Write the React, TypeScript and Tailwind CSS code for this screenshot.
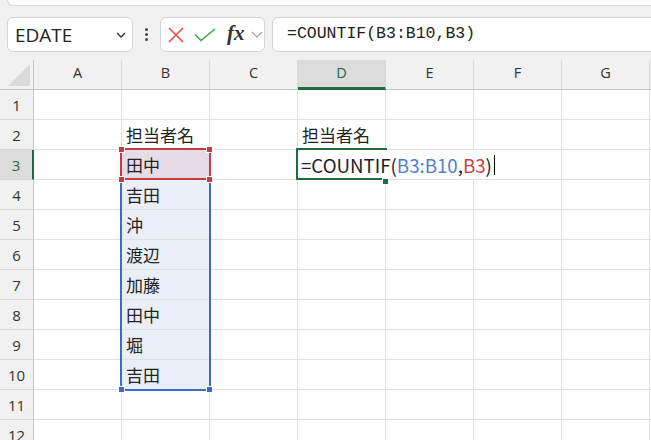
import React from 'react';

const COLS = ['A', 'B', 'C', 'D', 'E', 'F', 'G'];
const ROWS = [1, 2, 3, 4, 5, 6, 7, 8, 9, 10, 11, 12];

// 担当者名 list in column B
const NAMES: Record<number, string> = {
  2: '担当者名',
  3: '田中',
  4: '吉田',
  5: '沖',
  6: '渡辺',
  7: '加藤',
  8: '田中',
  9: '堀',
  10: '吉田',
};

const cellFont = { fontFamily: '"Noto Sans CJK JP", "Noto Sans", sans-serif' };

const FormulaBar = () => (
  <div className="h-[60px] bg-[#f1f1f1]">
    <div className="ml-[7px] h-[6px] bg-white border-b border-l border-[#d8d8d8] rounded-bl-[8px]" />
    <div className="flex items-center mt-[11px] h-[35px]">
      {/* name box */}
      <div className="ml-[7px] w-[126px] h-[35px] shrink-0 bg-white border border-[#d5d5d5] rounded-[6px] flex items-center justify-between pl-[7px] pr-[5px]">
        <span className="text-[19px] text-[#222] font-['Open_Sans',sans-serif] leading-none mt-[2px]">EDATE</span>
        <svg width="10" height="6" viewBox="0 0 10 6" className="mr-[1px]">
          <path d="M1 1 L5 5 L9 1" fill="none" stroke="#333" strokeWidth="1.3" />
        </svg>
      </div>
      {/* dots */}
      <div className="w-[27px] shrink-0 flex flex-col items-center gap-[2px]">
        <span className="w-[3px] h-[3px] rounded-full bg-[#444]" />
        <span className="w-[3px] h-[3px] rounded-full bg-[#444]" />
        <span className="w-[3px] h-[3px] rounded-full bg-[#444]" />
      </div>
      {/* cancel / enter / fx */}
      <div className="w-[105px] h-[35px] shrink-0 bg-white border border-[#d5d5d5] rounded-[6px] flex items-center pl-[7px]">
        <svg width="16" height="16" viewBox="0 0 16 16">
          <path d="M1 1 L15 15 M15 1 L1 15" stroke="#ee4b4b" strokeWidth="1.6" />
        </svg>
        <svg width="22" height="14" viewBox="0 0 22 14" className="ml-[10px]">
          <path d="M1 6.5 L7 12.5 L21 1" fill="none" stroke="#3fa24f" strokeWidth="1.6" />
        </svg>
        <span className="ml-[11px] text-[21px] italic font-bold text-[#333] leading-none font-['Liberation_Serif',serif] -mt-[3px]">fx</span>
        <svg width="12" height="7" viewBox="0 0 12 7" className="ml-[6px]">
          <path d="M1 1 L6 6 L11 1" fill="none" stroke="#a0a0a0" strokeWidth="1.2" />
        </svg>
      </div>
      {/* formula */}
      <div className="ml-[7px] w-[420px] h-[35px] shrink-0 bg-white border border-[#d5d5d5] rounded-l-[6px] flex items-center pl-[14px]">
        <span className="text-[16.5px] text-[#222] font-['Liberation_Mono',monospace] leading-none">=COUNTIF(B3:B10,B3)</span>
      </div>
    </div>
  </div>
);

const ColumnHeaders = () => (
  <div className="flex h-[30px] text-[14.5px] font-['Open_Sans',sans-serif]">
    <div className="w-[34px] shrink-0 bg-[#f1f1f1] border-r border-b border-[#c6c6c6] flex items-end justify-end pr-[3px] pb-[3px]">
      <svg width="22" height="22" viewBox="0 0 22 22">
        <path d="M22 0 L22 22 L0 22 Z" fill="#dadada" />
      </svg>
    </div>
    {COLS.map((c) => (
      <div
        key={c}
        className={
          c === 'D'
            ? 'w-[88px] shrink-0 bg-[#dcdcdc] border-r border-[#d6d6d6] border-b-[3px] border-b-[#1e6b41] flex items-center justify-center text-[#1e6b41] pb-[2px]'
            : 'w-[88px] shrink-0 bg-[#f1f1f1] border-r border-[#d9d9d9] border-b border-b-[#c6c6c6] flex items-center justify-center text-[#333] pb-[3px]'
        }
      >
        {c}
      </div>
    ))}
    <div className="flex-1 bg-[#f1f1f1] border-b border-[#c6c6c6]" />
  </div>
);

const Row = ({ r }: { r: number }) => (
  <div className="flex h-[30px]">
    <div
      className={
        r === 3
          ? 'w-[34px] shrink-0 bg-[#dcdcdc] border-r-2 border-r-[#1e6b41] border-b border-b-[#d6d6d6] flex items-center justify-center text-[#1e6b41] text-[15px] font-["Open_Sans",sans-serif] pt-[2px]'
          : 'w-[34px] shrink-0 bg-[#f1f1f1] border-r border-r-[#c6c6c6] border-b border-b-[#d6d6d6] flex items-center justify-center text-[#333] text-[15px] font-["Open_Sans",sans-serif] pt-[2px]'
      }
    >
      {r}
    </div>
    {COLS.map((c) => {
      let cls = 'w-[88px] shrink-0 border-r border-b border-[#e1e1e1] relative';
      if (c === 'B' && r === 3) cls += ' bg-[#e7dce5]';
      else if (c === 'B' && r >= 4 && r <= 10) cls += ' bg-[#e9eef7]';
      if (r === 3 && (c === 'D' || c === 'E')) cls += ' border-r-white';
      return (
        <div key={c} className={cls} style={cellFont}>
          {c === 'B' && NAMES[r] && (
            <span className="absolute left-[4px] top-0 leading-[30px] text-[17px] text-[#222] whitespace-nowrap">
              {NAMES[r]}
            </span>
          )}
          {c === 'D' && r === 2 && (
            <span className="absolute left-[4px] top-0 leading-[30px] text-[17px] text-[#222] whitespace-nowrap">担当者名</span>
          )}
          {c === 'D' && r === 3 && (
            <span className="absolute left-[3px] top-0 h-[30px] leading-[30px] text-[18.7px] text-[#222] whitespace-nowrap z-10 flex items-center">
              =COUNTIF(<span className="text-[#4d7ed4]">B3:B10</span>,<span className="text-[#cc4047]">B3</span>)
              <span className="ml-[2px] w-[1px] h-[20px] bg-black" />
            </span>
          )}
        </div>
      );
    })}
    <div className="flex-1 border-b border-[#e1e1e1]" />
  </div>
);

export default function App() {
  return (
    <div className="w-[651px] h-[440px] overflow-hidden bg-white select-none">
      <FormulaBar />
      <div className="relative">
        <ColumnHeaders />
        {ROWS.map((r) => (
          <Row key={r} r={r} />
        ))}

        {/* B3:B10 reference range */}
        <div className="absolute left-[120px] top-[88px] w-[91px] h-[243px] border-2 border-[#3c6dc5]" />
        {/* B3 reference */}
        <div className="absolute left-[120px] top-[88px] w-[91px] h-[32px] border-2 border-[#c43b40]" />
        <div className="absolute left-[118px] top-[86px] w-[7px] h-[7px] bg-[#c43b40] border border-white" />
        <div className="absolute left-[206px] top-[86px] w-[7px] h-[7px] bg-[#c43b40] border border-white" />
        <div className="absolute left-[118px] top-[116px] w-[7px] h-[7px] bg-[#c43b40] border border-white" />
        <div className="absolute left-[206px] top-[116px] w-[7px] h-[7px] bg-[#c43b40] border border-white" />
        <div className="absolute left-[118px] top-[326px] w-[7px] h-[7px] bg-[#3c6dc5] border border-white" />
        <div className="absolute left-[206px] top-[326px] w-[7px] h-[7px] bg-[#3c6dc5] border border-white" />

        {/* active cell D3 */}
        <div className="absolute left-[296px] top-[88px] w-[91px] h-[2px] bg-[#1e6b41] z-20" />
        <div className="absolute left-[296px] top-[88px] w-[2px] h-[32px] bg-[#1e6b41] z-20" />
        <div className="absolute left-[296px] top-[118px] w-[86px] h-[2px] bg-[#1e6b41] z-20" />
        <div className="absolute left-[382px] top-[118px] w-[7px] h-[7px] bg-[#1e6b41] border border-white z-20" />
      </div>
    </div>
  );
}
